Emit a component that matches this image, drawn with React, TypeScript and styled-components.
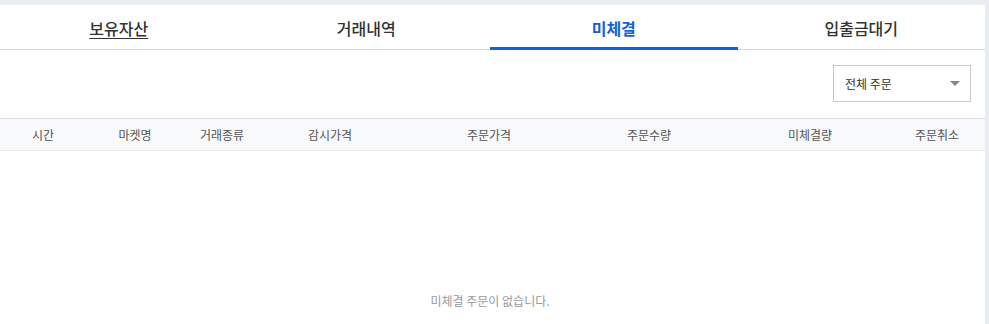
import styled, { createGlobalStyle } from "styled-components"

const GlobalStyle = createGlobalStyle`
    html, body {
        margin: 0;
        padding: 0;
        background: #e9ecf1;
        font-family: "Noto Sans CJK KR", "Noto Sans", sans-serif;
        overflow: hidden;
    }
`

const Page = styled.div`
    padding-top: 5px;
    height: 324px;
    box-sizing: border-box;
`

const Panel = styled.div`
    width: 990px;
    margin-left: -5px;
    height: 319px;
    background: #fff;
    display: flex;
    flex-direction: column;
`

const TabBar = styled.div`
    display: grid;
    grid-template-columns: repeat(4, 1fr);
    height: 45px;
    border-bottom: 1px solid #d5d6da;
    box-sizing: border-box;
`

const Tab = styled.div<{ $active?: boolean; $underline?: boolean }>`
    display: flex;
    align-items: center;
    justify-content: center;
    padding-top: 1px;
    font-size: 16px;
    font-weight: ${p => (p.$active ? 700 : 500)};
    color: ${p => (p.$active ? "#1261d8" : "#333")};
    text-decoration: ${p => (p.$underline ? "underline" : "none")};
    text-underline-offset: 3px;
    box-shadow: ${p => (p.$active ? "inset 0 -3px 0 #1261d8" : "none")};
    margin-bottom: -1px;
    cursor: pointer;
`

const FilterRow = styled.div`
    display: flex;
    justify-content: flex-end;
    padding: 15px 14px 16px 0;
`

const Select = styled.div`
    width: 138px;
    height: 37px;
    box-sizing: border-box;
    border: 1px solid #c9cacf;
    display: flex;
    align-items: center;
    justify-content: space-between;
    padding: 0 10px 0 11px;
    font-size: 12px;
    color: #333;
`

const Caret = styled.span`
    width: 0;
    height: 0;
    border-left: 5px solid transparent;
    border-right: 5px solid transparent;
    border-top: 5px solid #888;
`

const HeadRow = styled.div`
    display: grid;
    grid-template-columns: 96px 88px 86px 130px 188px 132px 190px 64px 1fr;
    height: 33px;
    box-sizing: border-box;
    background: #f8f9fb;
    border-top: 1px solid #dcdde2;
    border-bottom: 1px solid #eceef1;
`

const HeadCell = styled.div`
    display: flex;
    align-items: center;
    justify-content: center;
    font-size: 12px;
    color: #555;
`

const Empty = styled.div`
    flex: 1;
    display: flex;
    align-items: flex-end;
    justify-content: center;
    padding-bottom: 15px;
    font-size: 12px;
    color: #999;
`

const columns = ["시간", "마켓명", "거래종류", "감시가격", "주문가격", "주문수량", "미체결량", "주문취소"]

export default function App() {
    return (
        <Page>
            <GlobalStyle />
            <Panel>
                <TabBar>
                    <Tab $underline>보유자산</Tab>
                    <Tab>거래내역</Tab>
                    <Tab $active>미체결</Tab>
                    <Tab>입출금대기</Tab>
                </TabBar>
                <FilterRow>
                    <Select>
                        전체 주문
                        <Caret />
                    </Select>
                </FilterRow>
                <HeadRow>
                    {columns.map(c => (
                        <HeadCell key={c}>{c}</HeadCell>
                    ))}
                    <HeadCell />
                </HeadRow>
                <Empty>미체결 주문이 없습니다.</Empty>
            </Panel>
        </Page>
    )
}
